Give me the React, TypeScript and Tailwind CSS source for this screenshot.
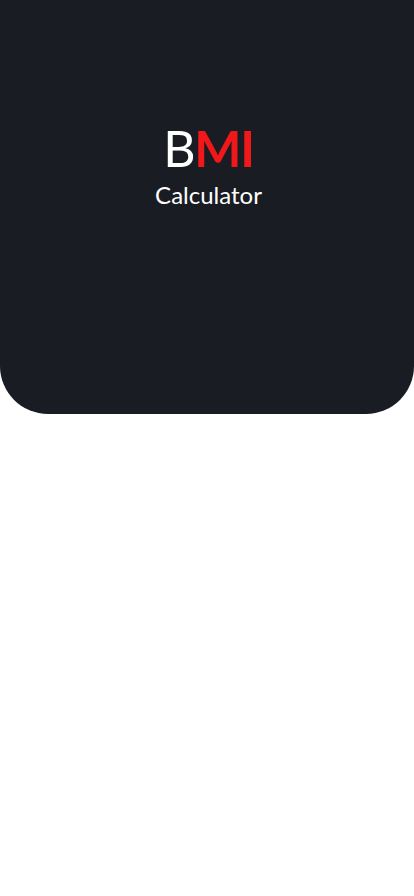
export default function App() {
  return (
    <div className="min-h-[896px] w-full bg-white" style={{ fontFamily: "Lato, 'Open Sans', sans-serif" }}>
      <div className="h-[414px] w-full bg-[#1a1c24] rounded-b-[48px] flex flex-col items-center justify-center pb-[84px]">
        <div className="text-[50px] leading-none tracking-tight pl-[3px]">
          <span className="text-white font-normal">B</span>
          <span className="text-[#f01818] font-bold">MI</span>
        </div>
        <div className="text-white text-[24px] leading-none mt-[10px] pl-[3px]">Calculator</div>
      </div>
    </div>
  );
}
